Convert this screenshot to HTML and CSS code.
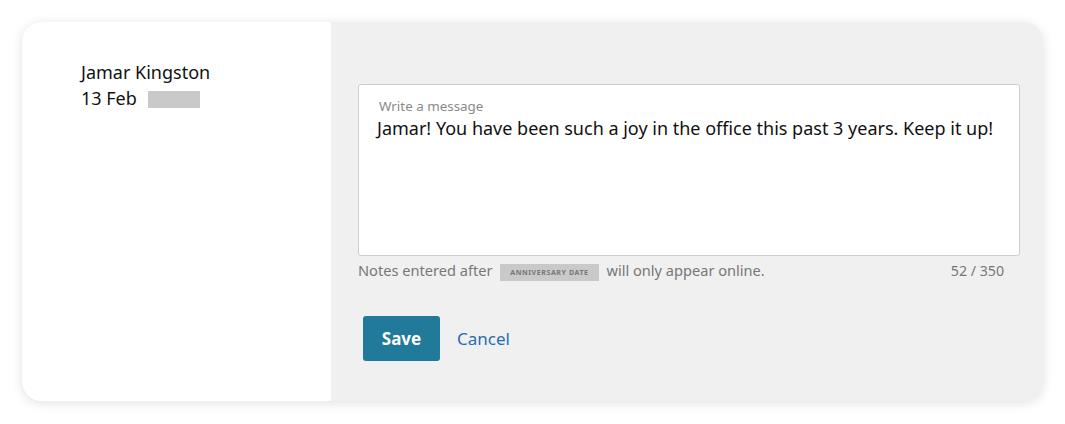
FILE: index.html
```html
<!DOCTYPE html>
<html lang="en">
<head>
  <meta charset="UTF-8">
  <title>Anniversary Note</title>
  <link rel="stylesheet" href="styles.css">
</head>
<body>
  <div class="card">
    <!-- Recipient -->
    <div class="person">
      <div class="name">Jamar Kingston</div>
      <div class="date">13 Feb <span class="redacted"></span></div>
    </div>

    <!-- Note form -->
    <div class="note">
      <div class="message-box">
        <div class="message-label">Write a message</div>
        <div class="message-text">Jamar! You have been such a joy in the office this past 3 years. Keep it up!</div>
      </div>
      <div class="hint-row">
        <span class="hint">Notes entered after <span class="tag">Anniversary date</span> will only appear online.</span>
        <span class="counter">52 / 350</span>
      </div>
      <div class="actions">
        <button class="save">Save</button>
        <a href="#" class="cancel">Cancel</a>
      </div>
    </div>
  </div>
</body>
</html>
```

FILE: styles.css
```css
/* General */
body {
  margin: 0;
  padding: 22px;
  background: #fff;
  font-family: 'Noto Sans', sans-serif;
  color: #111;
}

/* Card */
.card {
  display: flex;
  width: 1021px;
  height: 379px;
  border-radius: 20px;
  overflow: hidden;
  background: #f0f0f0;
  box-shadow: 0 2px 12px rgba(0, 0, 0, 0.12);
}

.person {
  width: 250px;
  padding: 37px 0 0 59px;
  background: #fff;
  font-size: 18px;
  line-height: 26px;
}

.redacted {
  display: inline-block;
  width: 52px;
  height: 17px;
  margin-left: 6px;
  vertical-align: -3px;
  background: #c9c9c9;
}

/* Note form */
.note {
  flex: 1;
  padding: 62px 23px 0 27px;
}

.message-box {
  height: 170px;
  padding: 0 18px;
  background: #fff;
  border: 1px solid #cdcdcd;
  border-radius: 3px;
}

.message-label {
  margin-top: 12px;
  font-size: 13.4px;
  line-height: 18px;
  color: #8a8a8a;
  padding-left: 2px;
}

.message-text {
  font-size: 18px;
  line-height: 26px;
}

.hint-row {
  display: flex;
  justify-content: space-between;
  align-items: center;
  margin-top: 4px;
  padding-right: 16px;
  font-size: 14.6px;
  line-height: 20px;
  color: #777;
}

.counter {
  font-size: 14.2px;
}

.tag {
  display: inline-block;
  margin: 0 4px;
  padding: 0 10px;
  line-height: 17px;
  vertical-align: 1px;
  background: #c9c9c9;
  color: #777;
  font-size: 7px;
  font-weight: bold;
  letter-spacing: 0.6px;
  text-transform: uppercase;
}

.actions {
  display: flex;
  align-items: center;
  gap: 17px;
  margin-top: 35px;
  padding-left: 5px;
}

.save {
  width: 77px;
  height: 45px;
  border: none;
  border-radius: 3px;
  background: #217a9a;
  color: #fff;
  font-family: 'Noto Sans', sans-serif;
  font-size: 17px;
  font-weight: bold;
  cursor: pointer;
}

.cancel {
  color: #2a6cb0;
  font-size: 17px;
  text-decoration: none;
}
```
